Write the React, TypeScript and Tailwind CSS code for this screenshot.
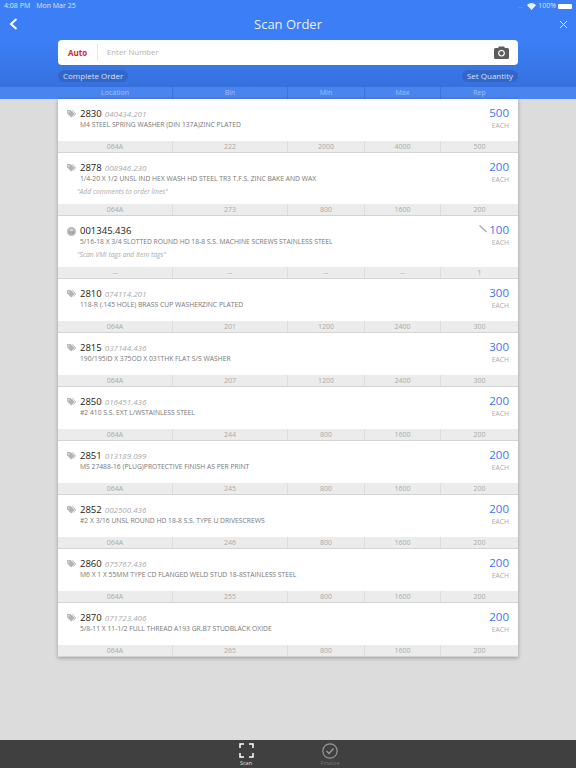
import React from "react";

type Row = { sku: string; alt?: string; desc: string; note?: string; qty: string; bin: string; min: string; max: string; rep: string; loc: string; box?: boolean };

const rows: Row[] = [
  { sku: "2830", alt: "040434.201", desc: "M4 STEEL SPRING WASHER (DIN 137A)ZINC PLATED", qty: "500", loc: "064A", bin: "222", min: "2000", max: "4000", rep: "500" },
  { sku: "2878", alt: "008946.230", desc: "1/4-20 X 1/2 UNSL IND HEX WASH HD STEEL TR3 T.F.S. ZINC BAKE AND WAX", note: "\"Add comments to order lines\"", qty: "200", loc: "064A", bin: "273", min: "800", max: "1600", rep: "200" },
  { sku: "001345.436", desc: "5/16-18 X 3/4 SLOTTED ROUND HD 18-8 S.S. MACHINE SCREWS STAINLESS STEEL", note: "\"Scan VMI tags and Item tags\"", qty: "100", loc: "--", bin: "--", min: "--", max: "--", rep: "1", box: true },
  { sku: "2810", alt: "074114.201", desc: "118-R (.145 HOLE) BRASS CUP WASHERZINC PLATED", qty: "300", loc: "064A", bin: "201", min: "1200", max: "2400", rep: "300" },
  { sku: "2815", alt: "037144.436", desc: "190/195ID X 375OD X 031THK FLAT S/S WASHER", qty: "300", loc: "064A", bin: "207", min: "1200", max: "2400", rep: "300" },
  { sku: "2850", alt: "016451.436", desc: "#2 410 S.S. EXT L/WSTAINLESS STEEL", qty: "200", loc: "064A", bin: "244", min: "800", max: "1600", rep: "200" },
  { sku: "2851", alt: "013189.099", desc: "MS 27488-16 (PLUG)PROTECTIVE FINISH AS PER PRINT", qty: "200", loc: "064A", bin: "245", min: "800", max: "1600", rep: "200" },
  { sku: "2852", alt: "002500.436", desc: "#2 X 3/16 UNSL ROUND HD 18-8 S.S. TYPE U DRIVESCREWS", qty: "200", loc: "064A", bin: "246", min: "800", max: "1600", rep: "200" },
  { sku: "2860", alt: "075767.436", desc: "M6 X 1 X 55MM TYPE CD FLANGED WELD STUD 18-8STAINLESS STEEL", qty: "200", loc: "064A", bin: "255", min: "800", max: "1600", rep: "200" },
  { sku: "2870", alt: "071723.406", desc: "5/8-11 X 11-1/2 FULL THREAD A193 GR.B7 STUDBLACK OXIDE", qty: "200", loc: "064A", bin: "265", min: "800", max: "1600", rep: "200" },
];

function TagIcon() {
  return (
    <svg width="9" height="8" viewBox="0 0 20 18" className="shrink-0">
      <path d="M0 1.500A1.500 1.500 0 0 1 1.500 0H8l8 8a1.600 1.600 0 0 1 0 2.200L10.500 16a1.600 1.600 0 0 1-2.200 0L0 7.500Z M4 2.800a1.400 1.400 0 1 0 .01 0Z" fill="#b4b4b4" fillRule="evenodd" />
      <path d="M11 0h1.500l7 8a1.600 1.600 0 0 1 0 2.200L14 16l-1-1 5-5.500Z" fill="#b4b4b4" />
    </svg>
  );
}

function BoxIcon() {
  return (
    <svg width="9" height="9" viewBox="0 0 18 18" className="shrink-0">
      <circle cx="9" cy="9" r="9" fill="#b8b8b8" />
      <path d="M9 3.500l5 2.500-5 2.500-5-2.500Z" fill="#d8d8d8" />
      <path d="M4 7.500l4.300 2.200v5l-4.300-2.200Z M14 7.500l-4.300 2.200v5l4.300-2.200Z" fill="#a0a0a0" />
    </svg>
  );
}

function Item({ r }: { r: Row }) {
  return (
    <div className="border-b border-[#d4d4d4]">
      <div className={`flex bg-white pl-[9px] pr-[9px] ${r.note ? "h-[51px]" : "h-[42px]"}`}>
        <div className="w-[13px] pt-[11px]">{r.box ? <BoxIcon /> : <TagIcon />}</div>
        <div className="min-w-0 flex-1 pt-[8px]">
          <div className="flex items-baseline gap-[3px] text-[#222] leading-[13px]">
            <span className="text-[9.500px]">{r.sku}</span>
            {r.alt && <span className="text-[8px] italic text-[#aaaaaa]">{r.alt}</span>}
          </div>
          <div className="whitespace-nowrap text-[6.750px] leading-[9px] text-[#777]">{r.desc}</div>
          {r.note && <div className="ml-[-3px] mt-[4px] text-[6.750px] italic leading-[9px] text-[#aaaaaa]">{r.note}</div>}
        </div>
        <div className="flex flex-col items-end pt-[6px]">
          <div className="flex items-center gap-[2px]">
            {r.box && (
              <svg width="8" height="8" viewBox="0 0 8 8" className="mb-[2px]">
                <path d="M0.500 0.500L7.500 7" stroke="#aaaaaa" strokeWidth="1.400" />
              </svg>
            )}
            <span className="text-[11.500px] leading-[15px] text-[#3f74f0]">{r.qty}</span>
          </div>
          <div className="mt-[1px] text-[6.750px] leading-[9px] text-[#aaaaaa]">EACH</div>
        </div>
      </div>
      <div className="flex h-[11px] bg-[#ececec] text-[7px] leading-[12px] text-[#aaaaaa]">
        <div className="w-[115px] border-r border-[#dddddd] text-center">{r.loc}</div>
        <div className="w-[115px] border-r border-[#dddddd] text-center">{r.bin}</div>
        <div className="w-[77px] border-r border-[#dddddd] text-center">{r.min}</div>
        <div className="w-[76px] border-r border-[#dddddd] text-center">{r.max}</div>
        <div className="w-[77px] text-center">{r.rep}</div>
      </div>
    </div>
  );
}

export default function App() {
  return (
    <div className="flex h-[768px] w-[576px] flex-col overflow-hidden bg-[#dcdcdc] font-['Open_Sans',sans-serif]">
      <header className="h-[87px] shrink-0 bg-gradient-to-b from-[#3b7ef5] via-[#3b7ef5] to-[#3671de] text-white">
        <div className="flex h-[11px] items-center justify-between px-[4px] pt-[1px] text-[7px] text-[#dce8ff]">
          <div className="flex gap-[6px]">
            <span>4:08 PM</span>
            <span>Mon Mar 25</span>
          </div>
          <div className="flex items-center gap-[2px]">
            <span className="mr-[2px] text-[5px] leading-none text-[#8fb4f8]">....</span>
            <svg width="9" height="7" viewBox="0 0 18 14">
              <path d="M9 14L0 4.500C5 -1.500 13 -1.500 18 4.500Z" fill="#e8f0ff" />
            </svg>
            <span>100%</span>
            <div className="h-[5px] w-[14px] rounded-[1px] bg-white" />
          </div>
        </div>
        <div className="relative flex h-[27px] items-center justify-center">
          <svg width="9" height="12" viewBox="0 0 9 12" className="absolute left-[9px] top-[7px]">
            <path d="M7.500 1L2 6l5.500 5" fill="none" stroke="white" strokeWidth="2" />
          </svg>
          <span className="pb-[2px] text-[13px] font-normal leading-[20px] text-[#eaf1ff]">Scan Order</span>
          <svg width="9" height="9" viewBox="0 0 9 9" className="absolute right-[8px] top-[9px]">
            <path d="M1 1l7 7M8 1l-7 7" stroke="#dce8ff" strokeWidth="1" />
          </svg>
        </div>
        <div className="mx-[58px] mt-[2px] flex h-[25px] items-center rounded-[4px] bg-white pr-[9px]">
          <span className="w-[39px] text-center text-[8px] font-bold text-[#cc2a1c]">Auto</span>
          <div className="h-[17px] w-px bg-[#e6e6e6]" />
          <span className="ml-[9px] flex-1 text-[7.800px] text-[#b0b0b0]">Enter Number</span>
          <svg width="15" height="13" viewBox="0 0 15 13">
            <path d="M1.500 2H4L5 .5h5L11 2h2.500A1.500 1.500 0 0 1 15 3.500v8A1.500 1.500 0 0 1 13.500 13h-12A1.500 1.500 0 0 1 0 11.500v-8A1.500 1.500 0 0 1 1.500 2ZM7.500 3.800a3.400 3.400 0 1 0 .01 0ZM7.500 5a2.200 2.200 0 1 1-.01 0Z" fill="#5c5c5c" fillRule="evenodd" />
          </svg>
        </div>
        <div className="mx-[58px] mt-[5px] flex justify-between">
          <span className="flex h-[12px] items-center rounded-full bg-[#3465c8] px-[5px] text-[8px] text-[#d5e2fb]">Complete Order</span>
          <span className="flex h-[12px] items-center rounded-full bg-[#3465c8] px-[5px] text-[8px] text-[#d5e2fb]">Set Quantity</span>
        </div>
      </header>
      <div className="flex h-[12px] shrink-0 bg-[#4a84ee] pl-[58px] text-[7px] leading-[12px] text-[#9fc1fa]">
        <div className="w-[115px] border-r border-[#3c73dc] text-center">Location</div>
        <div className="w-[115px] border-r border-[#3c73dc] text-center">Bin</div>
        <div className="w-[77px] border-r border-[#3c73dc] text-center">Min</div>
        <div className="w-[76px] border-r border-[#3c73dc] text-center">Max</div>
        <div className="w-[77px] text-center">Rep</div>
      </div>
      <main className="flex-1">
        <div className="mx-[58px] w-[460px] shadow-[0_1px_4px_rgba(0,0,0,0.3)]">
          {rows.map((r) => (
            <Item key={r.sku} r={r} />
          ))}
        </div>
      </main>
      <footer className="flex h-[28px] shrink-0 justify-center bg-[#404040]">
        <div className="flex w-[84px] flex-col items-center">
          <svg width="15" height="15" viewBox="0 0 15 15" className="mt-[3px]">
            <path d="M1 5V1h4M10 1h4v4M14 10v4h-4M5 14H1v-4" fill="none" stroke="white" strokeWidth="1.500" />
          </svg>
          <span className="mt-[1px] text-[5.500px] leading-[8px] text-[#e0e0e0]">Scan</span>
        </div>
        <div className="flex w-[84px] flex-col items-center">
          <svg width="16" height="16" viewBox="0 0 16 16" className="mt-[3px]">
            <circle cx="8" cy="8" r="7.200" fill="none" stroke="#9a9a9a" strokeWidth="1.200" />
            <path d="M4.500 8l2.500 2.500 4.500-5" fill="none" stroke="#9a9a9a" strokeWidth="1.400" />
          </svg>
          <span className="text-[5.500px] leading-[8px] text-[#777]">Finalize</span>
        </div>
      </footer>
    </div>
  );
}
